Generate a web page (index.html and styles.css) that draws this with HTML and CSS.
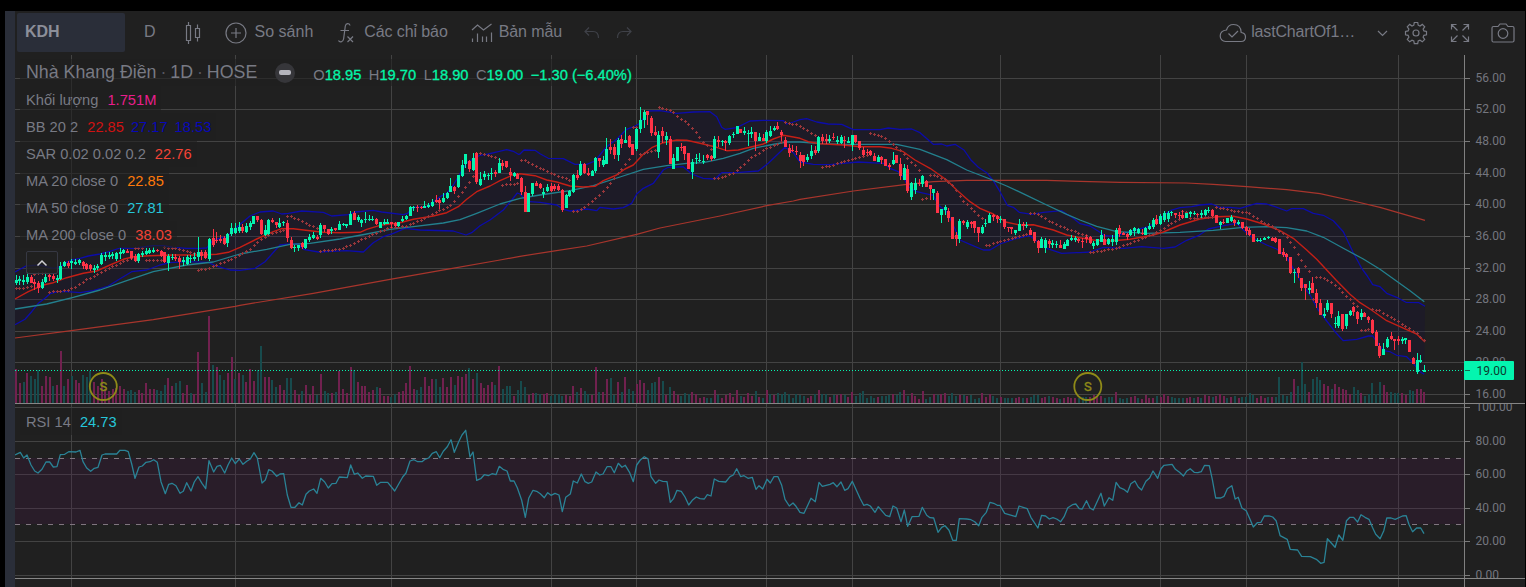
FILE: index.html
```html
<!DOCTYPE html>
<html lang="vi">
<head>
  <meta charset="UTF-8" />
  <meta name="viewport" content="width=device-width, initial-scale=1.0"/>
  <title>KDH - Nhà Khang Điền</title>
  <link rel="stylesheet" href="styles.css">
</head>
<body>

  <div class="layout">
    <div class="side-strip"></div>

    <div class="main">
      <div class="toolbar">
        <div class="symbol">KDH</div>
        <div class="tool interval">D</div>
        <div class="tool bars">
          <svg width="18" height="24" viewBox="0 0 18 24"><path d="M4.500 1v3.500M4.500 19.500V23M2.500 4.500h4v15h-4zM13.500 3.500v4M13.500 16.500v4M11.500 7.500h4v9h-4z"/></svg>
        </div>
        <div class="tool compare">
          <svg width="22" height="22" viewBox="0 0 22 22"><circle cx="11" cy="11" r="10"/><path d="M11 6v10M6 11h10"/></svg>
          <span>So sánh</span>
        </div>
        <div class="tool indicators">
          <svg width="18" height="22" viewBox="0 0 18 22"><path d="M13 3.500C12.800 1.500 9 .500 8.300 4L6.600 17C6 20.500 2.500 20.500 1.500 18.500M3.500 8.500h8.500M10.500 14.500l5.500 5.500M16 14.500l-5.500 5.500"/></svg>
          <span>Các chỉ báo</span>
        </div>
        <div class="tool templates">
          <svg width="22" height="20" viewBox="0 0 22 20"><path d="M1 7l5.500-5 6 5L20.500 1M1.500 15.500V19M6.500 10.500V19M11.500 13.500V19M15.500 13.500V19M20.500 9.500V19"/></svg>
          <span>Bản mẫu</span>
        </div>
        <div class="tool undo">
          <svg width="16" height="12" viewBox="0 0 16 12"><path d="M5 .5L1 4.500l4 4M1 4.500h8c4 0 5.500 2.500 5.500 6.500"/></svg>
          <svg width="16" height="12" viewBox="0 0 16 12"><path d="M11 .5l4 4-4 4M15 4.500H7c-4 0-5.500 2.500-5.500 6.500"/></svg>
        </div>
        <div class="tool save">
          <svg width="28" height="20" viewBox="0 0 28 20"><path d="M6.500 18.500h15.500c3 0 4.500-2 4.500-4.500s-2-4.200-4.300-4.500C22 4.500 19 1.500 14.500 1.500c-3.500 0-6 2-7 5.500C3.500 7.500 1.200 10 1.200 13s2.300 5.500 5.300 5.500zM9.500 10.500l3.500 3.500 6-6"/></svg>
          <span>lastChartOf1…</span>
        </div>
        <div class="tool caret">
          <svg width="11" height="7" viewBox="0 0 11 7"><path d="M1 1l4.500 4.500L10 1"/></svg>
        </div>
        <div class="tool gear">
          <svg width="24" height="24" viewBox="0 0 24 24"><path d="M10.300 1.500h3.400l.5 2.700 1.800.8 2.300-1.600 2.400 2.400-1.600 2.300.8 1.800 2.600.5v3.400l-2.600.5-.8 1.800 1.600 2.300-2.400 2.400-2.300-1.600-1.800.8-.5 2.600h-3.400l-.5-2.600-1.800-.8-2.300 1.600-2.400-2.400 1.600-2.300-.8-1.800-2.600-.5v-3.400l2.600-.5.8-1.800-1.600-2.300 2.400-2.400 2.300 1.600 1.800-.8z"/><circle cx="12" cy="12" r="3"/></svg>
        </div>
        <div class="tool full">
          <svg width="20" height="20" viewBox="0 0 20 20"><path d="M1.500 6.500v-5h5M1.500 1.500l6 6M13.500 1.500h5v5M18.500 1.500l-6 6M1.500 13.500v5h5M1.500 18.500l6-6M18.500 13.500v5h-5M18.500 18.500l-6-6"/></svg>
        </div>
        <div class="tool camera">
          <svg width="24" height="20" viewBox="0 0 24 20"><path d="M2.500 3.500h4.500l2-2.500h6l2 2.500h4.500q1.500 0 1.500 1.500v12.500q0 1.500-1.500 1.500h-19q-1.500 0-1.500-1.500V5q0-1.500 1.500-1.500z"/><circle cx="12" cy="10.500" r="4.800"/></svg>
        </div>
      </div>

      <div class="chart">
        <svg id="plot" width="1510" height="532" viewBox="15 55 1510 532"></svg>

        <div class="legend">
          <div class="row title">
            <span class="name">Nhà Khang Điền <i>·</i> 1D <i>·</i> HOSE</span>
            <span class="pill"></span>
            <span class="ohlc">O<b>18.95</b></span>
            <span class="ohlc">H<b>19.70</b></span>
            <span class="ohlc">L<b>18.90</b></span>
            <span class="ohlc">C<b>19.00</b></span>
            <span class="ohlc"><b>−1.30 (−6.40%)</b></span>
          </div>
          <div class="row">Khối lượng <span class="pink">1.751M</span></div>
          <div class="row">BB 20 2 <span class="red">22.85</span><span class="blue">27.17</span><span class="blue">18.53</span></div>
          <div class="row">SAR 0.02 0.02 0.2 <span class="tomato">22.76</span></div>
          <div class="row">MA 20 close 0 <span class="orange">22.85</span></div>
          <div class="row">MA 50 close 0 <span class="cyan">27.81</span></div>
          <div class="row">MA 200 close 0 <span class="tomato">38.03</span></div>
          <div class="collapse">
            <svg width="12" height="8" viewBox="0 0 12 8"><path d="M1.500 6.500L6 2l4.500 4.500"/></svg>
          </div>
        </div>

        <div class="legend rsi">
          <div class="row">RSI 14 <span class="cyan">24.73</span></div>
        </div>
      </div>
    </div>
  </div>

  <script src="chart.js"></script>

</body>
</html>
```

FILE: styles.css
```css
body {
  margin: 0;
  background-color: #000;
  color: #787a84;
  font-family: "Liberation Sans", Arial, sans-serif;
  overflow: hidden;
}

.layout {
  display: flex;
  width: 1520px;
  height: 576px;
  padding: 11px 0 0 5px;
}

.side-strip {
  width: 10px;
  background-color: #2a2e39;
}

.main {
  width: 1510px;
  background-color: #202020;
}

/* toolbar */
.toolbar {
  display: flex;
  align-items: center;
  height: 44px;
  box-sizing: border-box;
  padding: 0 10px 2px 2px;
  font-size: 16px;
}

.toolbar svg {
  fill: none;
  stroke: #787a84;
  stroke-width: 1.2;
  flex: none;
}

.symbol {
  width: 108px;
  height: 39px;
  line-height: 37px;
  padding-left: 8px;
  box-sizing: border-box;
  border-radius: 2px;
  background-color: #2a2e39;
  color: #8c8f99;
  font-weight: bold;
}

.tool {
  display: flex;
  align-items: center;
  white-space: nowrap;
}

.tool svg {
  position: relative;
  top: 1px;
}

.interval {
  margin-left: 19px;
}

.bars {
  margin-left: 28px;
}

.compare {
  margin-left: 23px;
  gap: 8px;
}

.indicators {
  margin-left: 24px;
  gap: 9px;
}

.indicators span {
  letter-spacing: -0.1px;
}

.templates {
  margin-left: 23px;
  gap: 6px;
}

.templates span {
  letter-spacing: -0.1px;
}

.undo {
  margin-left: 22px;
  gap: 16px;
}

.undo svg {
  stroke: #3f4148;
}

.save {
  margin-left: auto;
  gap: 4px;
}

.save span {
  letter-spacing: -0.15px;
}

.caret {
  margin-left: 22px;
}

.gear {
  margin-left: 16px;
}

.full {
  margin-left: 22px;
}

.camera {
  margin-left: 21px;
}

/* chart */
.chart {
  position: relative;
  height: 532px;
}

.chart > svg {
  display: block;
}

.crisp {
  shape-rendering: crispEdges;
}

.axis-label {
  font: 12px Roboto, sans-serif;
  fill: #74767f;
}

/* legend over the panes */
.legend {
  position: absolute;
  top: 4px;
  left: 5px;
  display: flex;
  flex-direction: column;
  align-items: flex-start;
}

.legend.rsi {
  top: 353px;
}

.row {
  display: flex;
  align-items: center;
  height: 27px;
  padding: 0 3px 0 6px;
  font-size: 14.67px;
  white-space: pre;
  background-color: rgba(32, 32, 32, 0.6);
}

.row span {
  margin-left: 5px;
  margin-right: 2px;
}

.title .name {
  margin: 0;
  font-size: 17.8px;
}

.title i {
  margin: 0 -1px;
  font-style: normal;
  color: #55575f;
}

.title .pill {
  width: 20px;
  height: 20px;
  margin: 0 17px 0 18px;
  border-radius: 50%;
  background-color: #36363a;
  display: flex;
  align-items: center;
  justify-content: center;
}

.pill::after {
  content: "";
  width: 12px;
  height: 5px;
  border-radius: 2px;
  background-color: #b5b5bd;
}

.title .ohlc {
  margin: 4px 0 0 1px;
}

.title .ohlc + .ohlc {
  margin-left: 7.5px;
}

.ohlc b {
  font-weight: normal;
  color: #04f5a8;
  -webkit-text-stroke: 0.3px #04f5a8;
}

.pink { color: #e91e8c; }
.red { color: #d01212; }
.blue { color: #0808b8; }
.tomato { color: #f44336; }
.orange { color: #ff7a0a; }
.cyan { color: #26c6da; }

.collapse {
  display: flex;
  align-items: center;
  justify-content: center;
  width: 30px;
  height: 21px;
  margin: 3px 0 0 6px;
  border: 1px solid #363843;
  border-radius: 2px;
  background-color: rgba(32, 32, 32, 0.8);
}

.collapse svg {
  fill: none;
  stroke: #d0d0d4;
  stroke-width: 1.5;
}
```

FILE: chart.js
```js
const plot = document.getElementById("plot");

const FIRST_X = 16;
const STEP = 1408.3 / 379;
const AXIS_X = 1464;

// points are stored in thirds of a pixel from (ox, oy), zx is the x scale
function at(ox, oy, text, zx = 3) {
  const n = text.trim().split(/\s+/).map(Number);
  const out = [];
  for (let i = 0; i < n.length; i += 2) out.push([ox + n[i] / zx, oy + n[i + 1] / 3]);
  return out;
}

const A = t => at(0, 90, t);
const B = t => at(240, 90, t);
const C = t => at(520, 90, t);
const D = t => at(800, 90, t);
const E = t => at(1080, 150, t);
const F = t => at(1300, 280, t);

// up/down, body top, body bottom, high, low
const candles = [
  [90, `g 570 579 555 585,g 568 574 558 585,g 570 577 556 586,g 562 575 547 583,r 561 578 556 580,r 577 583 567 600,
  r 580 594 573 608,g 575 593 567 597,g 560 576 550 578,r 556 560 550 572,r 559 566 553 572,g 565 569 555 578,
  g 528 567 515 571,g 517 529 513 532,r 519 527 514 534,g 514 519 506 537,g 515 521 507 525,g 510 520 508 525,
  r 516 527 514 537,r 522 536 519 540,r 526 538 522 542,g 535 541 526 548,g 529 535 522 541,g 496 522 490 525,
  g 496 500 486 512,g 494 502 487 508,g 493 499 486 506,g 490 506 487 512,g 487 492 475 508,g 479 488 476 492,
  r 484 489 477 490,r 484 504 482 510,r 498 514 492 517,g 493 514 488 518,g 488 495 483 500,g 483 492 475 495,
  g 481 488 473 492,g 479 485 472 490,r 479 484 477 487,r 483 499 480 502,r 487 516 485 520,g 497 520 493 543,
  g 500 505 492 510,r 501 507 492 512,r 505 515 498 537,g 510 516 500 528,g 500 521 495 525,g 503 508 495 518,
  g 500 507 488 514,g 486 500 440 512,r 485 499 480 510,r 487 503 479 507,g 447 508 443 513,r 443 466 417 470,
  r 449 453 426 458,r 446 452 435 460,r 443 462 437 464,g 431 458 428 470,g 413 432 400 438,g 414 428 400 432,
  g 410 423 395 430,r 410 424 402 430,g 407 426 400 430,g 399 411 392 420,g 379 401 378 403,r 379 391 377 395`],
  [90, `r 390 432 387 435,g 420 435 405 437,g 390 432 388 434,r 390 396 384 400,r 396 405 395 413,g 398 411 384 415,
  g 396 399 392 408,r 399 444 390 456,r 450 474 441 477,g 470 474 465 486,g 465 474 464 483,r 460 471 457 477,
  g 447 475 446 478,g 441 450 432 456,g 435 445 426 448,r 441 447 435 450,g 405 435 399 444,r 405 418 404 426,
  r 417 432 416 435,g 416 424 411 432,r 414 420 413 422,g 402 420 393 421,g 402 405 399 409,g 402 409 401 414,
  g 372 405 363 406,r 369 390 363 391,g 382 390 375 396,g 390 399 388 411,g 387 391 366 399,g 386 390 375 393,
  g 387 390 378 393,r 387 402 384 405,g 396 414 395 415,g 396 401 388 406,g 396 401 387 403,r 396 402 395 415,
  r 399 408 396 411,g 396 409 395 411,g 387 393 378 396,g 378 387 375 389,g 351 378 348 379,g 350 354 349 364,
  r 350 354 345 366,r 350 354 349 356,g 348 353 333 355,g 345 351 339 354,g 336 347 327 350,r 329 335 315 339,
  r 330 339 324 357,g 324 336 309 339,g 309 324 306 327,g 288 305 264 306,r 290 303 288 312,g 255 291 254 294,
  g 225 258 210 261,g 192 222 191 234,r 213 237 210 246,g 204 240 189 243,r 190 276 187 282,g 267 284 246 288,
  g 252 262 243 270,g 255 258 249 270,g 249 252 234 270,r 246 252 240 261,g 219 249 204 250,r 219 228 210 240,
  r 213 231 212 235,r 246 255 234 273,g 249 258 246 262,r 252 267 249 268,r 264 306 261 315,r 306 366 288 367,
  g 309 366 308 367,g 279 312 278 318,r 279 288 273 289`],
  [90, `r 282 294 279 297,g 306 312 294 324,g 291 303 282 306,r 288 302 278 306,r 289 298 283 303,r 288 300 282 303,
  r 300 360 297 366,g 315 354 312 355,g 303 318 300 321,g 255 306 252 309,r 255 264 240 270,g 222 255 213 258,
  r 222 249 219 252,r 249 255 234 258,g 243 258 240 259,g 204 243 201 249,r 204 213 203 230,g 210 225 198 231,
  g 177 222 144 223,r 171 179 147 192,r 171 195 162 207,g 150 195 144 213,r 147 161 135 174,g 150 158 111 160,
  r 138 171 135 174,r 162 195 161 196,g 117 177 114 183,g 90 117 51 129,g 66 90 60 114,r 63 75 62 105,
  r 84 129 78 138,r 126 136 108 139,g 135 186 123 204,r 123 138 111 159,g 138 151 126 165,r 147 222 138 223,
  g 204 237 192 238,g 171 213 170 214,r 171 175 159 183,r 168 192 167 210,r 189 237 188 238,g 216 246 207 267,
  g 204 207 192 222,g 210 213 189 216,g 213 216 195 222,r 195 204 192 210,r 198 207 195 214,g 147 204 138 207,
  r 150 155 138 171,g 153 156 150 168,r 153 158 150 183,g 138 159 135 165,g 132 135 126 144,g 108 132 107 133,
  r 117 129 116 130,g 124 129 111 135,g 129 132 120 168,g 126 131 111 144,r 126 154 125 183,g 141 152 129 153,
  r 143 153 132 154,g 126 153 120 159,g 123 138 108 140,g 114 120 108 123,r 108 117 96 120,r 126 135 120 153,
  r 150 171 141 172,r 174 189 162 201,r 180 183 165 186,r 183 186 168 195,r 195 213 186 234,r 195 215 194 228,
  g 201 210 192 216,g 183 198 165 207,r 180 188 168 195,g 141 183 138 189`],
  [90, `r 141 153 132 162,r 147 153 132 162,g 147 153 135 159,r 141 144 129 150,g 150 157 138 162,g 141 160 135 162,
  r 150 154 138 174,g 152 159 141 160,g 135 165 134 183,r 135 155 134 160,r 153 174 152 180,r 180 195 171 198,
  r 186 190 177 195,r 183 196 180 198,r 198 213 189 214,g 201 215 195 216,r 201 211 198 222,r 207 227 206 228,
  r 225 231 219 240,g 210 222 186 225,r 195 218 194 219,r 222 258 204 270,g 234 270 222 271,r 237 303 225 309,
  g 279 321 276 330,g 279 300 264 312,r 279 283 267 288,g 258 281 255 291,r 273 291 270 292,r 285 297 284 330,
  g 297 309 296 330,r 309 369 303 370,g 357 375 356 399,g 351 360 345 375,r 363 384 354 396,r 381 447 380 448,
  r 435 447 426 468,g 393 447 387 459,r 393 399 390 405,g 396 411 390 417,r 396 402 393 414,r 393 414 392 429,
  r 411 429 410 456,g 411 429 405 432,g 399 402 387 411,g 375 399 369 400,r 375 381 372 393,r 378 388 375 399,
  g 387 390 378 400,r 387 411 386 417,r 411 414 410 426,r 411 418 410 432,g 420 429 419 435,g 402 423 387 424,
  r 402 409 396 420,g 406 409 396 414,r 420 435 414 436,r 426 453 425 459,r 453 474 450 489,g 447 474 441 475,
  g 450 474 444 489,r 453 462 447 474,g 459 465 450 474,g 462 465 453 474,r 465 473 450 474,g 462 477 456 478,
  g 450 468 447 469,g 444 449 435 453,g 444 450 438 456,r 447 454 444 459,r 453 456 444 474,r 441 446 435 459,
  r 441 459 438 462,g 459 468 453 477,g 447 465 446 468`],
  [150, `g 255 275 240 276,r 267 285 252 286,g 267 283 264 285,g 267 276 255 288,g 240 276 234 286,r 234 251 225 261,
  r 250 254 246 256,r 252 261 249 270,g 240 255 237 258,g 234 243 231 258,g 237 249 234 253,r 249 252 237 255,
  g 234 255 231 256,g 228 237 219 240,g 210 231 204 237,r 207 222 195 225,g 198 222 192 225,g 189 210 183 216,
  g 189 207 183 216,g 186 189 183 198,r 189 195 188 204,r 195 198 186 207,r 195 205 180 207,g 189 204 188 205,
  g 187 191 183 200,g 189 192 183 195,r 191 194 189 200,g 189 195 180 204,g 181 195 177 198,g 179 182 171 189,
  r 180 199 177 201,r 195 219 194 220,g 216 225 213 237,r 216 219 207 222,g 204 219 203 220,g 201 213 195 216,
  r 210 219 207 228,g 216 222 210 225,r 216 235 215 236,r 231 243 228 255,r 240 255 234 258,r 252 276 251 277,
  g 269 272 264 277,g 269 272 265 275,g 263 270 261 271,g 262 265 258 267,r 265 272 262 274,r 265 276 262 279,
  r 267 312 266 313,r 306 315 294 321,r 312 321 309 333,r 321 369 320 372,g 366 370 357 399,r 354 370 351 384,
  r 384 414 383 423,r 402 415 401 450,g 414 420 393 432,r 399 429 381 430,r 429 459 417 474,r 459 495 447 496,
  g 492 498 474 504,g 459 480 450 486,r 459 492 458 504,g 518 522 501 534,g 498 528 483 534,r 492 537 491 543,
  g 492 528 491 537,g 483 495 480 498,r 471 486 468 498,r 486 507 484 522,g 489 501 477 510,r 489 501 486 502,
  r 501 510 498 519,r 510 549 507 552,r 546 588 540 589`],
  [280, `r 198 228 189 234,g 207 225 189 226,g 177 201 171 204,r 168 178 156 180,r 177 183 176 210,r 178 183 168 195,
  g 177 183 171 192,g 174 180 173 192,r 180 216 179 217,r 234 252 231 253,g 240 276 219 282,g 240 246 225 249,
  g 270 276 255 277`]
];

// p = down volume, t = up volume, then height in px
const volumes = `p34 p20 t21 p30 t27 t24 t33 p17 p27 p26 t17 p18 p52 t17 p24 t27 p23 p20 t28 t26
t32 p21 p17 p24 p14 p12 p14 p15 p17 p14 t12 t13 t11 p13 p10 p20 p14 p14 t13 t12
t18 p25 p17 t20 t22 p10 p18 t10 p9 p51 t20 t11 p87 t38 p36 t28 t23 p30 p46 t24
p30 t28 p21 p34 p22 t33 t57 p26 p26 t23 t16 p18 p13 t25 t25 p13 p8 t12 p18 p8
p17 t8 p29 t12 t10 p10 t11 p32 p14 p10 p36 t33 p21 p17 p17 p11 p13 t16 p15 p7
p7 t6 t9 p11 p12 p20 p37 p14 t13 t16 p26 p17 p24 t24 t16 p25 p16 p26 t18 p27
p26 p29 t35 p24 t30 p20 p15 p18 p21 t18 p37 t14 t17 t17 p7 t13 t22 t16 p8 p10
t10 t9 p9 p10 t7 t9 t9 t7 p8 p7 p17 t11 p15 t12 t9 p8 p36 t11 p11 p24
t25 t8 p21 t11 p26 t14 t12 p19 p23 p20 t13 t20 t21 p26 t22 p8 t16 p12 p8 t7
t10 t9 p11 p9 p5 p6 t5 t5 p13 t8 p5 p8 p10 p6 p13 t7 p6 p10 p7 t12
p6 t5 p13 t9 p8 t10 t9 t11 t9 t5 t9 t8 t7 p5 p7 t9 p13 t9 t9 p6
t8 p8 p9 t8 p6 p11 t7 t10 t12 t5 t7 t5 p6 t7 t7 t8 p9 t8 t11 p13
t7 p10 p7 p4 p12 t4 t6 p9 t8 p9 p10 t7 t10 t7 p8 t8 p7 t8 t4 t5
p10 p6 p9 t7 t5 p6 t5 t5 t5 p5 p6 t5 p5 t6 t8 t8 p5 p6 t7 p6
p5 t4 p5 p6 p5 p5 t5 t6 t6 p6 p8 p7 p7 t5 t6 t6 p11 t5 t4 t5
p6 p7 t5 p4 p8 p5 p5 t7 p6 p9 p7 t6 t5 t5 t5 p5 p6 t5 p6 t5
p8 p7 t6 p7 p9 p7 t5 p6 t7 p5 t6 t6 t10 t8 p5 p7 p5 t6 p6 t6
t26 t8 t7 t11 p24 t17 t41 t19 p11 t24 t26 t23 p19 p17 t14 p19 p16 p14 p13 p9
t16 t13 p10 t7 t9 t20 t9 t21 p18 p11 t11 t10 t10 p10 p8 t13 t12 p14 p14 p11`.split(/\s+/);

const bbUpper = [].concat(
  A("45 546 60 538 78 528 120 525 160 535 182 530 200 517 215 510 240 505 265 498 300 492 330 484 360 474 400 475 430 471 460 467 490 467 520 472 560 475 600 475 620 474 640 450 680 440 710 412"),
  B("30 378 60 366 100 363 125 372 145 370 185 363 250 367 275 378 325 374 345 366 400 361 425 366 490 374 503 370 520 352 560 350 600 320 620 310 640 285 680 218 700 207 720 196 745 192 775 185 800 179 820 184 835 193"),
  C("0 192 12 180 45 181 60 191 85 205 130 206 165 223 200 223 225 213 260 170 290 148 320 118 345 108 360 100 385 63 420 62 470 70 520 66 570 65 590 80 605 112 615 118 650 113 690 93 730 91 790 92 800 102 820 96"),
  D("0 89 20 86 50 96 85 102 125 103 160 119 240 119 265 114 300 118 335 117 360 128 400 163 425 162 440 168 465 163 492 180 512 209 535 232 560 248 580 272 600 305 622 346 640 352 658 367 695 373 730 367 785 362 820 385"),
  E("0 221 30 228 60 247 75 257 110 259 130 250 180 236 210 229 240 205 270 182 300 173 335 170 360 165 395 162 420 172 450 172 480 175 510 166 530 160 560 162 585 170 620 183 635 176 670 176 700 190 730 196 760 212 790 245 820 308 845 355 862 378"),
  F("218 14 240 20 260 40 290 52 318 67 357 68 375 79")
);

const bbLower = [].concat(
  A("45 704 75 688 95 665 115 640 135 625 150 611 175 605 200 605 240 608 280 602 325 588 360 566 395 545 440 540 480 525 510 518 560 515 625 517 645 527 690 540"),
  B("0 541 45 535 75 515 120 465 150 462 175 462 190 478 235 486 320 482 370 486 400 458 430 440 460 430 495 415 540 420 640 423 678 435 695 428 720 407 750 390 790 360 815 330 832 309"),
  C("0 312 20 334 60 337 110 345 130 358 150 363 200 357 230 362 240 352 280 357 310 353 335 340 350 312 370 295 400 280 430 240 445 232 490 230 515 252 550 265 585 267 605 248 650 248 715 243 745 220 795 172 820 188"),
  D("0 216 40 223 90 224 130 220 175 216 250 220 270 235 295 245 310 262 325 290 350 305 400 316 415 345 440 365 455 395 480 450 510 463 550 480 570 480 600 462 650 445 690 437 705 450 740 475 785 490 830 488"),
  E("0 308 30 306 70 292 130 295 185 290 250 295 285 291 320 271 355 257 385 237 420 229 470 220 490 240 520 265 560 285 590 297 620 322 640 355 665 400 690 435 715 480 740 513 765 545 790 572 830 568 865 558"),
  F("218 168 230 185 250 212 270 215 290 226 320 230 340 250 360 275 373 283")
);

const ma20 = [].concat(
  A("45 627 85 605 130 585 160 578 200 563 250 550 290 543 330 525 370 508 400 500 450 497 520 495 600 495 650 493 685 487"),
  B("0 472 50 447 100 425 125 416 160 416 210 422 250 427 300 428 360 427 380 418 420 406 480 398 520 388 580 378 620 368 655 350 680 328 710 305 750 288 780 272 820 254"),
  C("0 251 45 257 80 270 110 276 150 288 190 291 225 289 250 272 290 255 315 237 340 225 370 193 395 173 430 158 470 150 500 151 540 160 590 172 620 182 655 180 690 172 730 162 760 147 790 136 820 141"),
  D("0 145 25 155 60 161 130 165 180 170 240 170 275 175 310 185 345 210 390 235 440 270 470 300 510 335 540 355 580 372 620 397 660 405 700 404 760 420 800 435"),
  E("0 263 40 270 90 273 150 268 220 255 250 246 300 225 360 207 410 200 460 199 500 207 550 222 600 242 640 265"),
  F("20 -90 50 -62 80 -30 108 0 150 43 180 68 210 87 260 122 300 140 350 162 375 186")
);

const ma50 = [].concat(
  A("45 657 140 642 220 622 300 600 380 572 460 545 560 525 640 516"),
  B("0 492 80 478 150 463 210 460 300 447 380 432 450 418 520 410 610 399 660 389 710 370 780 342"),
  C("0 325 60 315 150 302 220 287 300 261 370 238 440 227 500 220 550 218 610 205 660 190 700 175 750 165 800 156"),
  D("0 156 60 161 140 163 290 163 360 178 440 209 500 240 570 267 620 288 680 316 740 345 800 373"),
  E("0 210 50 229 110 245 200 250 300 247 400 241 490 232 560 230 620 233 680 243 730 262 790 295 850 327 900 358"),
  F("285 0 330 32 373 65")
);

const ma200 = [].concat(
  at(0, 300, "45 114 214 92 460 59 706 19"),
  B("0 646 220 610 450 568 620 538 780 510"),
  C("0 499 95 484 200 468 350 433 420 414 600 378 740 347 820 333"),
  D("0 328 160 303 320 283 400 275 500 271 740 271"),
  E("0 94 120 97 320 99 400 103 500 110 620 119 720 131 820 153 900 172 1035 211")
);

const rsi = [].concat(
  at(0, 300, `45 465 61 457 71 474 81 465 93 495 104 513 114 519 126 508 138 486 149 486 160 501 171 500 181 464 194 463
  206 455 228 456 240 451 249 485 260 504 272 514 283 505 294 502 306 465 315 462 350 462 360 451 375 451 385 455 395 492
  405 535 417 501 427 498 438 487 450 485 461 479 472 487 483 545 496 581 506 553 516 550 528 557 540 580 550 574 560 548
  573 573 583 546 594 530 606 550 617 566 627 482 641 516 651 499 661 496 674 519 684 495 695 474 706 491 718 477 729 493
  740 484 751 477 762 458 772 474 786 549 796 540 806 509 816 513 830 529 840 522 851 521 862 585 873 622 885 622 897 608
  907 615 918 583 928 573 941 567 951 580 962 535 974 546 985 564 996 551 1008 550 1018 531 1042 533 1052 495 1063 523
  1073 519 1087 535 1097 528 1120 529 1130 556 1142 547 1163 547 1184 573 1208 531 1218 519 1230 483 1242 479 1253 485
  1266 485 1275 478 1286 474 1297 460 1309 455 1319 473 1330 454 1342 440 1353 419 1363 457 1376 425 1386 405 1397 391
  1410 471 1419 456 1430 541 1442 536 1453 524 1465 527 1476 521 1488 524 1498 499 1509 508 1521 513 1531 543 1542 543 1552 563`),
  at(500, 320, `65 541 76 592 86 535 99 511 110 514 121 521 133 533 143 518 153 526 165 520 177 525 187 575 197 532 211 522
  220 483 232 489 244 462 255 485 265 490 275 486 288 456 299 465 309 462 321 440 333 440 343 458 355 430 366 442 376 436
  389 458 400 485 410 435 421 420 433 410 444 416 453 470 467 490 477 480 488 484 501 485 511 547 521 535 531 511 544 514
  555 531 566 555 577 541 589 531 600 536 613 537 622 524 633 528 643 477 656 484 677 486 690 470 700 465 710 446 722 470
  732 467 744 475 757 472 768 508 777 497 788 507 801 478 811 489 822 470 834 470 845 496 855 538 868 558 879 549 888 559
  900 577 912 580 933 535 946 545 957 487 967 499 990 493 1000 488 1011 500 1023 486 1034 511 1044 506 1057 484 1080 535
  1091 556 1101 553 1111 558 1125 577 1135 560 1157 586 1169 590 1179 558 1190 564 1203 605 1213 570 1223 619 1236 590
  1257 589 1267 562 1280 586 1290 593 1301 594 1314 637 1325 622 1335 617 1347 631 1358 661 1369 661 1378 596 1400 597
  1413 599 1424 605 1436 617 1446 592 1459 577 1470 547 1481 550 1492 556`),
  at(1000, 320, `0 556 14 580 24 583 47 590 57 558 69 562 81 566 92 592 113 624 124 586 136 588 147 597 158 593 169 597
  181 605 191 590 202 563 216 554 226 552 236 566 245 567 258 542 268 564 278 570 301 520 311 558 325 533 336 541 346 487
  357 503 369 508 380 517 390 491 402 483 412 501 422 510 435 484 446 474 456 453 470 475 480 446 489 436 513 433 523 448
  535 457 547 468 556 454 567 446 579 457 590 458 600 455 610 436 624 437 633 478 643 534 658 534 668 529 678 506 691 497
  701 537 710 532 721 564 734 572 745 597 755 621 767 608 778 607 788 588 803 588 813 591 823 602 835 647 856 658 865 688
  887 690 899 709 925 710 943 718 956 730 966 727 976 656 999 682 1010 645 1022 661 1033 602 1043 592 1054 592 1066 606
  1076 584 1088 592 1100 598 1110 622 1120 643 1133 656 1144 632 1153 594 1166 594 1178 598 1200 588 1211 587 1219 613
  1230 635 1242 624 1254 624 1264 641`, 2.981)
);

const sar = [
  A("48 595 70 595 82 592 97 590"), A("104 553 138 550"),
  A("149 606 205 602 230 590 260 570 300 550 340 530 370 515 395 506"),
  A("405 476 430 476"), A("438 512 485 512"), A("493 473 530 476 585 490"),
  A("595 541 630 535 700 505 725 492 750 478 780 450 805 436 853 420"),
  B("142 379 155 380 180 392 210 407 232 415"),
  B("241 484 300 478 335 465 370 447 410 430 450 414 500 409 550 388 600 362 630 350 660 315 680 288 703 256"),
  B("709 189 735 193 780 208"), B("787 286 834 281"),
  C("4 211 15 211 60 235 100 252 150 271"),
  C("160 365 175 364 205 345 240 316 270 282 300 245 331 205"),
  C("337 112 351 112"), C("361 193 380 188 408 182"),
  C("415 52 455 63 480 85 505 103 530 130 550 157 573 178"),
  C("583 266 605 263 640 250 670 225 700 200 740 176 786 157"),
  C("796 97 830 105 860 120 885 137"),
  D("67 232 90 229 130 215 170 204 204 196"),
  D("211 130 245 138 270 155 300 180 323 205 346 227 360 244"),
  D("367 328 381 325"),
  D("391 256 412 259 440 272 460 290 490 332 520 362 549 386"),
  D("556 467 568 466 600 454 640 445 684 433"),
  D("691 370 712 371 745 392 790 412 830 427 860 437"),
  E("28 307 60 305 110 295 160 277 220 253 250 238 280 217 300 209"),
  E("307 184 321 187"), E("331 206 399 201"),
  E("409 172 450 181 508 190 540 212 580 232 610 250 640 288 664 330 690 368"),
  E("694 448 700 448"),
  E("709 382 733 385 770 408 800 440 834 472"),
  E("844 541 867 539"),
  F("217 88 240 93 270 110 310 135 350 160 375 184")
];

const gridX = [71, 235, 391, 551, 636, 766, 852, 1000, 1160, 1246, 1398];
const priceY = [78, 109, 141, 173, 204, 236, 268, 299, 331, 362, 394];
const rsiY = [407, 441, 474, 508, 541, 575];

let svg = "";
const rect = (x, y, w, h, fill) => `<rect x="${x}" y="${y}" width="${w}" height="${h}" fill="${fill}"/>`;
const str = pts => pts.map(p => p[0].toFixed(1) + "," + p[1].toFixed(1)).join(" ");
const line = (pts, color, width) =>
  `<polyline points="${str(pts)}" fill="none" stroke="${color}" stroke-width="${width}" stroke-linejoin="round"/>`;

function drawGrid() {
  svg += `<g class="crisp">`;
  gridX.forEach(x => svg += rect(x, 55, 1, 532, "#434343"));
  priceY.concat(rsiY).forEach(y => svg += rect(15, y, AXIS_X - 15, 1, "#434343"));
  svg += `</g>`;
}

function drawVolume() {
  svg += `<g class="crisp">`;
  volumes.forEach((v, i) => {
    const h = Number(v.slice(1));
    const x = Math.round(FIRST_X + i * STEP - 0.9);
    svg += rect(x, 403 - h, 2, h, v[0] === "p" ? "#71214f" : "#174b4d");
  });
  svg += `</g>`;
}

function drawBands() {
  svg += `<polygon points="${str(bbUpper.concat([...bbLower].reverse()))}" fill="rgba(20, 10, 70, 0.2)"/>`;
  svg += line(ma200, "#a8352c", 1.2);
  svg += line(bbUpper, "#0c0cab", 1.3) + line(bbLower, "#0c0cab", 1.3);
  svg += line(ma50, "#23808e", 1.3);
  svg += line(ma20, "#c41f16", 1.4);
}

function drawCandles() {
  let i = 0;
  svg += `<g class="crisp">`;
  candles.forEach(([top, text]) => {
    text.split(",").forEach(item => {
      const [dir, ...v] = item.trim().split(" ");
      const [a, b, hi, lo] = v.map(n => Math.round(top + n / 3));
      const x = Math.floor(FIRST_X + i * STEP + 0.15);
      const color = dir === "g" ? "#04f5af" : "#ff3347";
      svg += rect(x, hi, 1, Math.max(lo - hi, 1), color);
      svg += rect(x - 1, a, 3, Math.max(b - a, 1), color);
      i++;
    });
  });
  svg += `</g>`;
}

// one small cross per bar, following each run
function drawSar() {
  svg += `<g class="crisp">`;
  sar.forEach(run => {
    const last = run[run.length - 1];
    for (let i = 0; i < 380; i++) {
      const x = FIRST_X + i * STEP + 0.2;
      if (x < run[0][0] - 1 || x > last[0] + 1) continue;
      let k = 0;
      while (k < run.length - 2 && run[k + 1][0] < x) k++;
      const [p, q] = [run[k], run[k + 1]];
      const t = Math.min(1, Math.max(0, (x - p[0]) / (q[0] - p[0])));
      const y = Math.floor(p[1] + (q[1] - p[1]) * t);
      const cx = Math.floor(x);
      svg += rect(cx - 1, y, 3, 1, "#98363a") + rect(cx, y - 1, 1, 3, "#98363a");
    }
  });
  svg += `</g>`;
}

function drawRsi() {
  svg += rect(15, 458, AXIS_X - 15, 66, "rgba(80, 20, 80, 0.2)");
  [458.5, 524.5].forEach(y => {
    svg += `<path d="M15 ${y}H${AXIS_X}" stroke="#80757f" stroke-dasharray="5 6"/>`;
  });
  svg += line(rsi, "#2a8396", 1.3);
}

function drawMarkers() {
  svg += `<path class="crisp" d="M15 370.500H${AXIS_X}" stroke="#04f5af" stroke-dasharray="1 2"/>`;
  [103.3, 1087.8].forEach(x => {
    svg += `<circle cx="${x}" cy="386.500" r="13.500" fill="none" stroke="#8f8a18" stroke-width="1.800"/>`;
    svg += `<text x="${x}" y="390.500" text-anchor="middle" font-family="Roboto" font-size="13" fill="#8f8a18" stroke="#8f8a18" stroke-width="0.400">S</text>`;
  });
}

function drawAxis() {
  svg += `<clipPath id="top"><rect x="1465" y="55" width="60" height="348"/></clipPath>`;
  svg += `<clipPath id="low"><rect x="1465" y="404" width="60" height="174"/></clipPath>`;
  svg += `<g class="axis-label" clip-path="url(#top)">`;
  priceY.forEach((y, i) => svg += `<text x="1475.500" y="${y + 4.3}">${(56 - i * 4).toFixed(2)}</text>`);
  svg += `</g><g class="axis-label" clip-path="url(#low)">`;
  rsiY.forEach((y, i) => svg += `<text x="1475.500" y="${y + 4.3}">${(100 - i * 20).toFixed(2)}</text>`);
  svg += `</g><g class="crisp">`;
  priceY.concat(rsiY).forEach(y => svg += rect(AXIS_X, y, 6, 1, "#7a7a7a"));
  svg += rect(AXIS_X, 55, 1, 532, "#808080");
  svg += rect(15, 403, 1510, 1, "#868686") + rect(15, 578, 1510, 1, "#868686");
  svg += `</g>`;
  svg += `<rect x="1464" y="361" width="50" height="19" rx="1" fill="#04f5af"/>`;
  svg += rect(1465, 370, 5, 1, "#0b6b50");
  svg += `<text class="axis-label" x="1476.500" y="375" style="fill: #0a3b2e">19.00</text>`;
}

drawGrid();
drawVolume();
drawBands();
drawSar();
drawCandles();
drawRsi();
drawMarkers();
drawAxis();
plot.innerHTML = svg;
```
